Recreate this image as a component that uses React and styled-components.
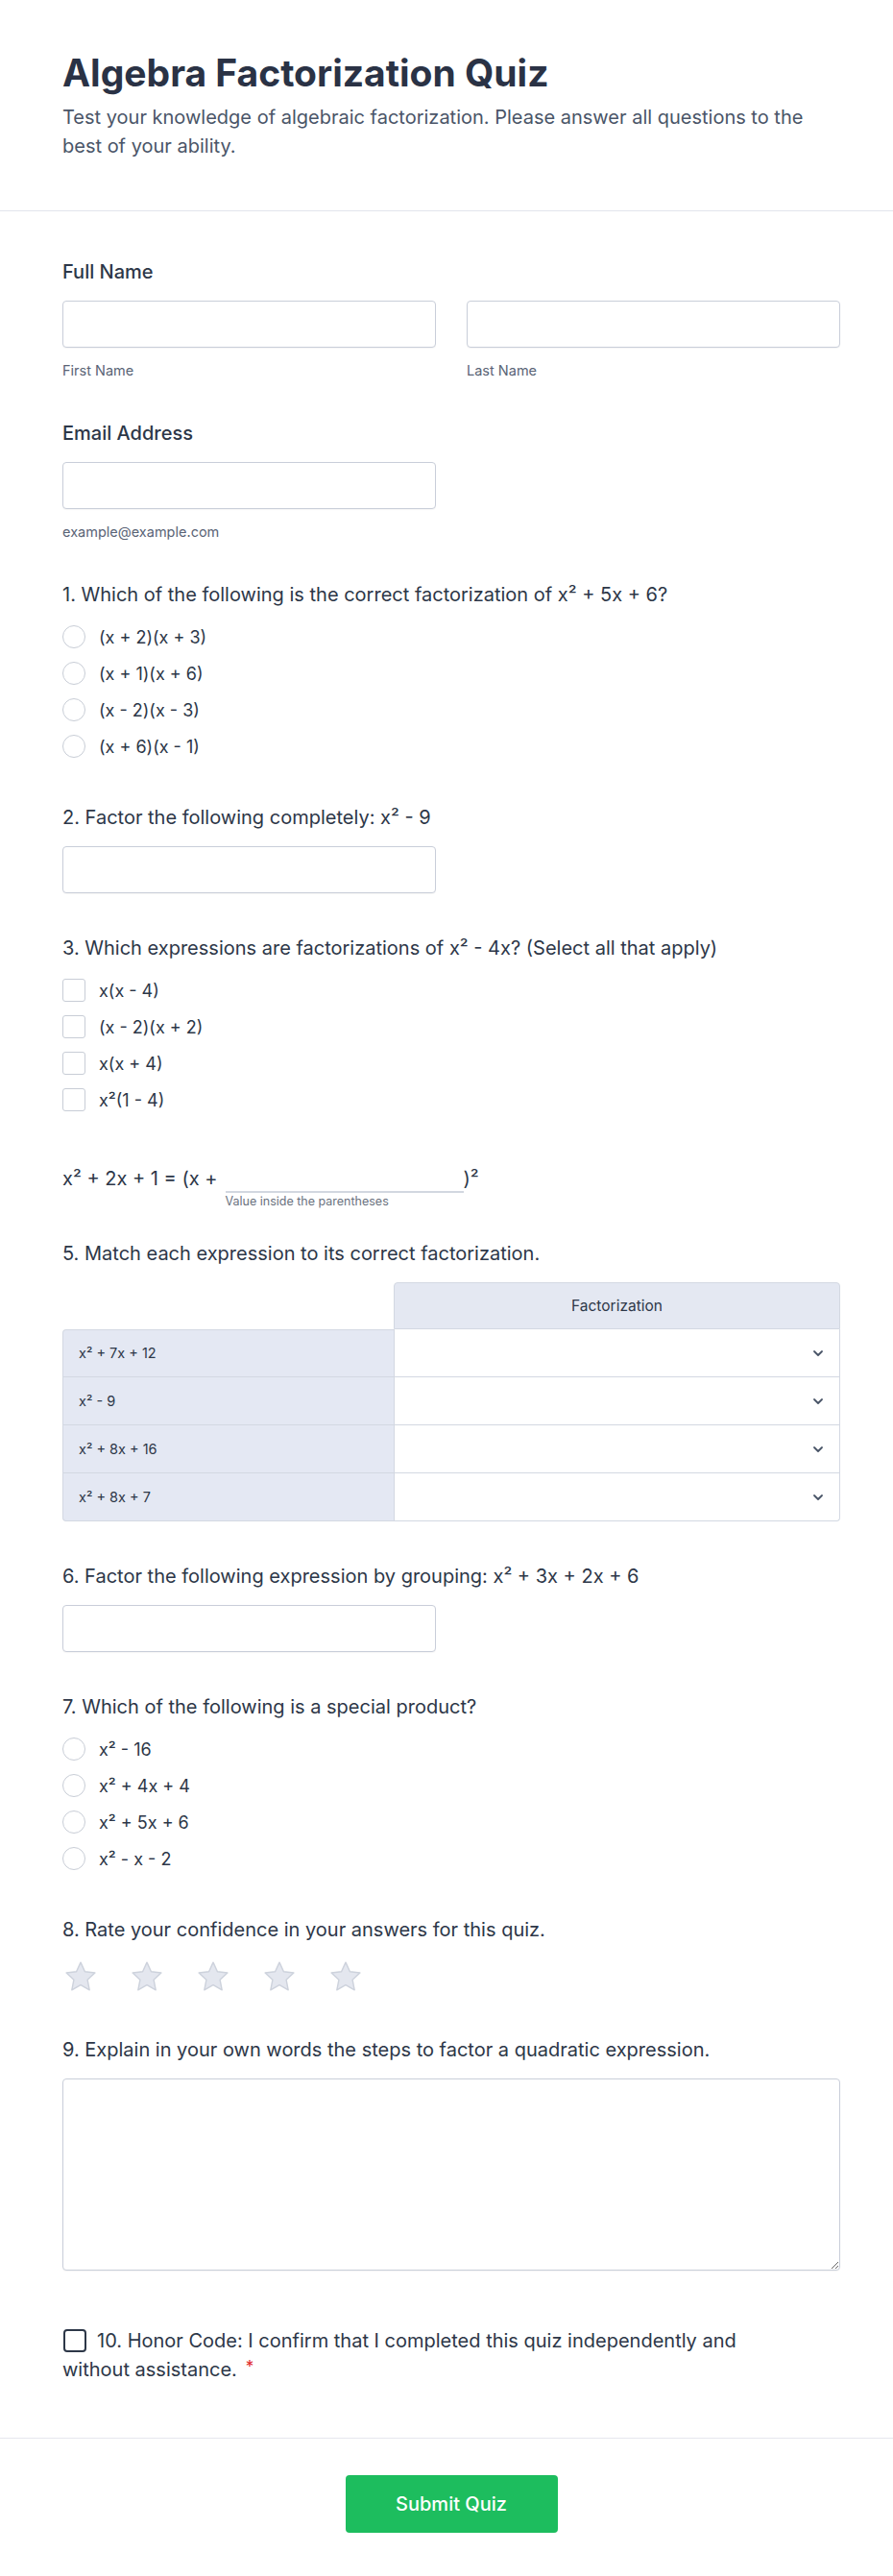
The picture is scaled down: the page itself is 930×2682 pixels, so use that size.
import React from "react";
import styled, { createGlobalStyle } from "styled-components";

const GlobalStyle = createGlobalStyle`
  * { box-sizing: border-box; }
  body {
    margin: 0;
    background: #fff;
    font-family: Inter, "Noto Sans", sans-serif;
    color: #2d3748;
  }
`;

const Header = styled.header`
  padding: 52px 60px 52px 65px;
  border-bottom: 1px solid #e2e4ec;
`;

const Title = styled.h1`
  margin: 0;
  font-size: 39px;
  line-height: 48px;
  font-weight: 700;
  color: #2a3245;
`;

const Subtitle = styled.p`
  margin: 7px 0 0;
  font-size: 20px;
  line-height: 30px;
  color: #4a5568;
`;

const Form = styled.form`
  padding: 50px 55px 57px 65px;
`;

const Field = styled.div`
  margin-bottom: ${(p) => (p.$mb !== undefined ? p.$mb : 44)}px;
`;

const Label = styled.div`
  font-size: 20px;
  line-height: 27px;
  font-weight: ${(p) => (p.$strong ? 500 : 400)};
  color: #2d3748;
  margin-bottom: 16px;
`;

const NameRow = styled.div`
  display: grid;
  grid-template-columns: 1fr 1fr;
  gap: 32px;
`;

const TextInput = styled.input`
  display: block;
  width: ${(p) => (p.$half ? "calc((100% - 32px) / 2)" : "100%")};
  height: 49px;
  border: 1px solid #c9ced9;
  border-radius: 4px;
  background: #fff;
  box-shadow: 0 1px 1px rgba(0, 0, 0, 0.04);
`;

const Hint = styled.div`
  margin-top: 16px;
  font-size: 14.5px;
  line-height: 16px;
  color: #5a6476;
`;

const OptionList = styled.div`
  display: flex;
  flex-direction: column;
  gap: 10px;
  padding-bottom: 3px;
`;

const Option = styled.label`
  display: flex;
  align-items: center;
  gap: 14px;
  height: 28px;
  font-size: 18px;
  color: #2d3748;
`;

const Radio = styled.span`
  width: 24px;
  height: 24px;
  flex: none;
  border: 1.5px solid #c8cdd6;
  border-radius: 50%;
  background: #fff;
`;

const Check = styled.span`
  width: 24px;
  height: 24px;
  flex: none;
  border: 1.5px solid #c8cdd6;
  border-radius: 3px;
  background: #fff;
`;

const InlineRow = styled.div`
  display: flex;
  align-items: flex-start;
  font-size: 20px;
  color: #2d3748;
`;

const InlineText = styled.span`
  padding-top: 8px;
  line-height: 27px;
  white-space: pre;
`;

const BlankWrap = styled.div`
  display: flex;
  flex-direction: column;
  width: 248px;
  margin-left: 8px;
`;

const BlankInput = styled.input`
  height: 36px;
  border: none;
  border-bottom: 2px solid #d2d7e0;
  background: transparent;
  outline: none;
`;

const BlankHint = styled.div`
  margin-top: 2px;
  font-size: 12.5px;
  line-height: 14px;
  color: #6b7280;
`;

const Matrix = styled.div`
  display: grid;
  grid-template-columns: 345px 1fr;
`;

const Corner = styled.div``;

const HeadCell = styled.div`
  height: 49px;
  display: flex;
  align-items: center;
  justify-content: center;
  background: #e4e8f2;
  border: 1px solid #d3d8e2;
  border-radius: 4px 4px 0 0;
  font-size: 15.5px;
  color: #2d3748;
`;

const RowLabel = styled.div`
  height: 50px;
  display: flex;
  align-items: center;
  padding-left: 16px;
  background: #e4e8f3;
  border-left: 1px solid #d3d8e2;
  border-bottom: 1px solid #d3d8e2;
  border-top: ${(p) => (p.$first ? "1px solid #d3d8e2" : "none")};
  border-radius: ${(p) => (p.$first ? "4px 0 0 0" : p.$last ? "0 0 0 4px" : "0")};
  font-size: 14.5px;
  line-height: 20px;
  color: #2d3748;
`;

const RowSelect = styled.div`
  height: 50px;
  display: flex;
  align-items: center;
  justify-content: flex-end;
  padding-right: 16px;
  background: #fff;
  border-left: 1px solid #d3d8e2;
  border-right: 1px solid #d3d8e2;
  border-bottom: 1px solid #d3d8e2;
  border-radius: ${(p) => (p.$last ? "0 0 4px 0" : "0")};
  color: #4a5568;
`;

const Stars = styled.div`
  display: flex;
  gap: 31px;
  height: 38px;
  align-items: flex-start;
`;

const TextArea = styled.textarea`
  display: block;
  width: 100%;
  height: 200px;
  border: 1px solid #c9ced9;
  border-radius: 4px;
  background: #fff;
  box-shadow: 0 1px 1px rgba(0, 0, 0, 0.04);
  font-family: inherit;
`;

const Honor = styled.label`
  display: block;
  max-width: 740px;
  font-size: 20px;
  line-height: 27px;
  color: #2d3748;
`;

const HonorBox = styled.span`
  display: inline-block;
  width: 24px;
  height: 24px;
  margin: 0 11px 0 1px;
  vertical-align: -5px;
  border: 2px solid #2d3748;
  border-radius: 4px;
`;

const Required = styled.span`
  color: #e02424;
  margin-left: 9px;
  font-size: 17px;
  vertical-align: 4px;
`;

const Footer = styled.div`
  display: flex;
  justify-content: center;
  padding: 38px 55px 48px 65px;
  border-top: 1px solid #e6e7ee;
`;

const SubmitButton = styled.button`
  width: 221px;
  height: 60px;
  border: none;
  border-radius: 4px;
  background: #1dbd5e;
  color: #fff;
  font-family: inherit;
  font-size: 20px;
  font-weight: 500;
`;

const Chevron = () => (
  <svg width="12" height="8" viewBox="0 0 12 8">
    <path d="M2 2l4 4 4-4" fill="none" stroke="#4a5568" strokeWidth="1.8" strokeLinecap="round" strokeLinejoin="round" />
  </svg>
);

const Star = () => (
  <svg width="38" height="38" viewBox="0 0 24 24">
    <path
      d="M12 2.6l2.8 6.1 6.6.8-4.9 4.6 1.3 6.6L12 17.4l-5.8 3.3 1.3-6.6-4.9-4.6 6.6-.8z"
      fill="#e4e7ef"
      stroke="#cdd2dc"
      strokeWidth="0.9"
      strokeLinejoin="round"
    />
  </svg>
);

const q1 = ["(x + 2)(x + 3)", "(x + 1)(x + 6)", "(x - 2)(x - 3)", "(x + 6)(x - 1)"];
const q3 = ["x(x - 4)", "(x - 2)(x + 2)", "x(x + 4)", "x²(1 - 4)"];
const q5 = ["x² + 7x + 12", "x² - 9", "x² + 8x + 16", "x² + 8x + 7"];
const q7 = ["x² - 16", "x² + 4x + 4", "x² + 5x + 6", "x² - x - 2"];

const App = () => {
  return (
    <React.Fragment>
      <GlobalStyle />
      <Header>
        <Title>Algebra Factorization Quiz</Title>
        <Subtitle>
          Test your knowledge of algebraic factorization. Please answer all questions to the best of your ability.
        </Subtitle>
      </Header>
      <Form onSubmit={(ev) => ev.preventDefault()}>
        <Field>
          <Label $strong>Full Name</Label>
          <NameRow>
            <div>
              <TextInput />
              <Hint>First Name</Hint>
            </div>
            <div>
              <TextInput />
              <Hint>Last Name</Hint>
            </div>
          </NameRow>
        </Field>

        <Field>
          <Label $strong>Email Address</Label>
          <TextInput $half />
          <Hint>example@example.com</Hint>
        </Field>

        <Field>
          <Label>1. Which of the following is the correct factorization of x² + 5x + 6?</Label>
          <OptionList>
            {q1.map((item) => (
              <Option key={item}>
                <Radio />
                {item}
              </Option>
            ))}
          </OptionList>
        </Field>

        <Field>
          <Label>2. Factor the following completely: x² - 9</Label>
          <TextInput $half />
        </Field>

        <Field>
          <Label>3. Which expressions are factorizations of x² - 4x? (Select all that apply)</Label>
          <OptionList>
            {q3.map((item) => (
              <Option key={item}>
                <Check />
                {item}
              </Option>
            ))}
          </OptionList>
        </Field>

        <Field $mb={34}>
          <InlineRow>
            <InlineText>x² + 2x + 1 = (x +</InlineText>
            <BlankWrap>
              <BlankInput />
              <BlankHint>Value inside the parentheses</BlankHint>
            </BlankWrap>
            <InlineText>)²</InlineText>
          </InlineRow>
        </Field>

        <Field>
          <Label>5. Match each expression to its correct factorization.</Label>
          <Matrix>
            <Corner />
            <HeadCell>Factorization</HeadCell>
            {q5.map((item, i) => (
              <React.Fragment key={item}>
                <RowLabel $first={i === 0} $last={i === q5.length - 1}>
                  {item}
                </RowLabel>
                <RowSelect $last={i === q5.length - 1}>
                  <Chevron />
                </RowSelect>
              </React.Fragment>
            ))}
          </Matrix>
        </Field>

        <Field>
          <Label>6. Factor the following expression by grouping: x² + 3x + 2x + 6</Label>
          <TextInput $half />
        </Field>

        <Field>
          <Label>7. Which of the following is a special product?</Label>
          <OptionList>
            {q7.map((item) => (
              <Option key={item}>
                <Radio />
                {item}
              </Option>
            ))}
          </OptionList>
        </Field>

        <Field>
          <Label>8. Rate your confidence in your answers for this quiz.</Label>
          <Stars>
            {[1, 2, 3, 4, 5].map((n) => (
              <Star key={n} />
            ))}
          </Stars>
        </Field>

        <Field $mb={60}>
          <Label>9. Explain in your own words the steps to factor a quadratic expression.</Label>
          <TextArea />
        </Field>

        <Field $mb={0}>
          <Honor>
            <HonorBox />
            10. Honor Code: I confirm that I completed this quiz independently and without assistance.
            <Required>*</Required>
          </Honor>
        </Field>
      </Form>
      <Footer>
        <SubmitButton type="submit">Submit Quiz</SubmitButton>
      </Footer>
    </React.Fragment>
  );
};

export default App;
